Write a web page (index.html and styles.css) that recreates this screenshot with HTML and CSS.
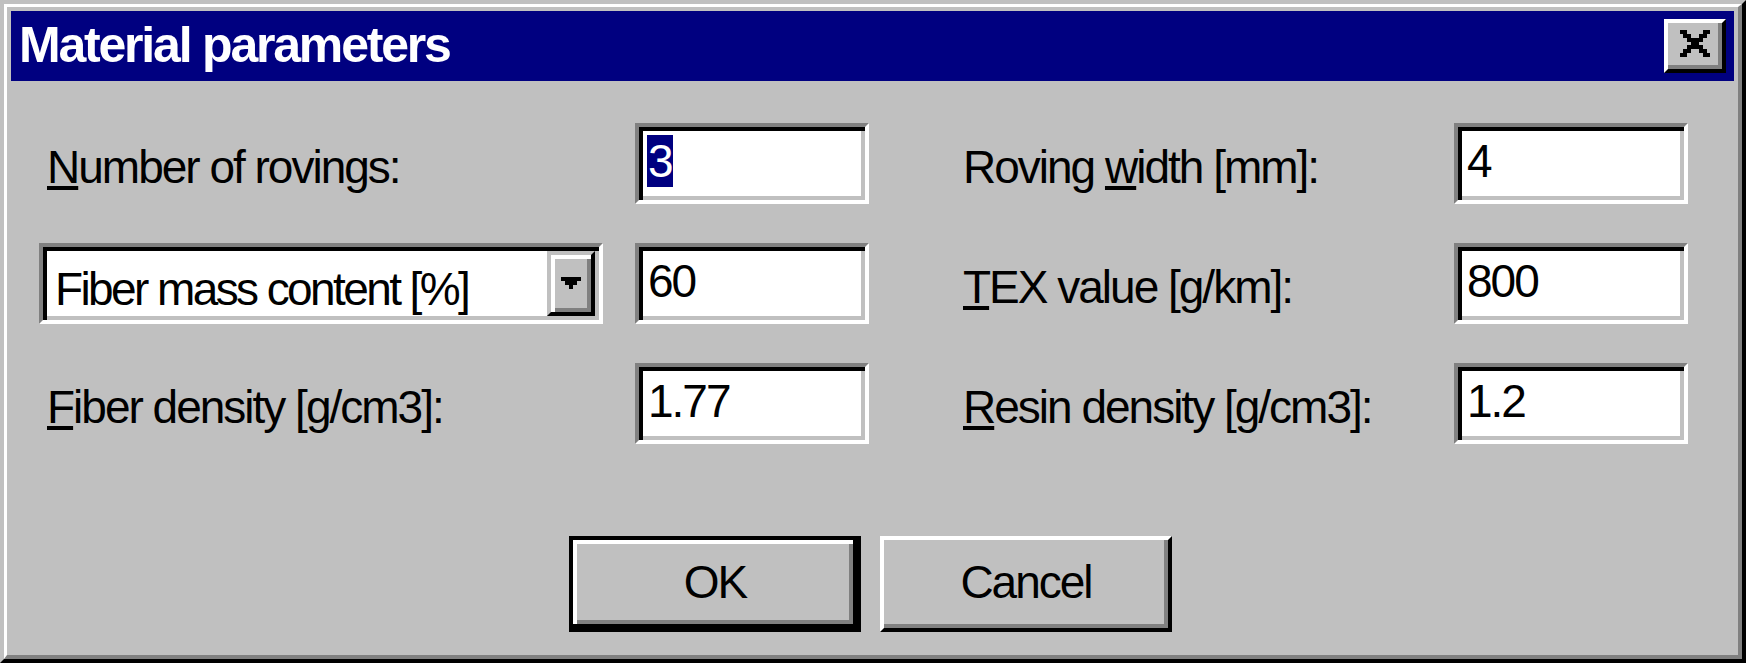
FILE: index.html
```html
<!DOCTYPE html>
<html>
<head>
<meta charset="utf-8">
<title>Material parameters</title>
<link rel="stylesheet" href="styles.css">
</head>
<body>
<div class="window">
  <div class="frame">
    <div class="titlebar">
      <span class="title">Material parameters</span>
      <div class="close" aria-label="Close">
        <svg class="close-glyph" viewBox="0 0 8 7" width="32" height="27" shape-rendering="crispEdges">
          <rect x="0" y="0" width="2" height="1"/><rect x="6" y="0" width="2" height="1"/>
          <rect x="1" y="1" width="2" height="1"/><rect x="5" y="1" width="2" height="1"/>
          <rect x="2" y="2" width="4" height="1"/>
          <rect x="3" y="3" width="2" height="1"/>
          <rect x="2" y="4" width="4" height="1"/>
          <rect x="1" y="5" width="2" height="1"/><rect x="5" y="5" width="2" height="1"/>
          <rect x="0" y="6" width="2" height="1"/><rect x="6" y="6" width="2" height="1"/>
        </svg>
      </div>
    </div>
    <div class="client">
      <div class="grid">
        <div class="label left"><u>N</u>umber of rovings:</div>
        <div class="edit"><span class="sel">3</span></div>
        <div class="label right">Roving <u>w</u>idth [mm]:</div>
        <div class="edit">4</div>

        <div class="combo">
          <span class="combo-text">Fiber mass content [%]</span>
          <span class="drop">
            <svg viewBox="0 0 5 3" width="20" height="12" shape-rendering="crispEdges">
              <rect x="0" y="0" width="5" height="1"/>
              <rect x="1" y="1" width="3" height="1"/>
              <rect x="2" y="2" width="1" height="1"/>
            </svg>
          </span>
        </div>
        <div class="edit">60</div>
        <div class="label right"><u>T</u>EX value [g/km]:</div>
        <div class="edit">800</div>

        <div class="label left"><u>F</u>iber density [g/cm3]:</div>
        <div class="edit">1.77</div>
        <div class="label right"><u>R</u>esin density [g/cm3]:</div>
        <div class="edit">1.2</div>
      </div>
      <div class="buttons">
        <div class="btn default">OK</div>
        <div class="btn">Cancel</div>
      </div>
    </div>
  </div>
</div>
</body>
</html>
```

FILE: styles.css
```css
html, body {
  margin: 0;
  padding: 0;
}

body {
  width: 1746px;
  height: 663px;
  overflow: hidden;
  background: #c0c0c0;
  font-family: "Liberation Sans", Arial, sans-serif;
  color: #000;
}

.window {
  box-sizing: border-box;
  width: 1746px;
  height: 663px;
  border: 4px solid;
  border-color: #c0c0c0 #000 #000 #c0c0c0;
}

.frame {
  box-sizing: border-box;
  height: 100%;
  border-style: solid;
  border-width: 3px 4px 4px 3px;
  border-color: #fff #808080 #808080 #fff;
  padding: 4px;
  display: flex;
  flex-direction: column;
}

.titlebar {
  height: 70px;
  flex: none;
  background: #000080;
  display: flex;
  justify-content: space-between;
  align-items: flex-start;
  padding-left: 8px;
}

.title {
  color: #fff;
  font-weight: bold;
  font-size: 50px;
  line-height: 68px;
  letter-spacing: -2.2px;
  white-space: nowrap;
}

.close {
  box-sizing: border-box;
  width: 62px;
  height: 54px;
  margin: 8px 8px 0 0;
  border: 4px solid;
  border-color: #fff #000 #000 #fff;
  box-shadow: inset -4px -4px 0 #808080;
  background: #c0c0c0;
  display: flex;
  justify-content: center;
  align-items: flex-start;
  padding-top: 7px;
}

.close-glyph {
  display: block;
  fill: #000;
}

.client {
  flex: 1;
  padding-top: 42px;
}

.grid {
  margin-left: 28px;
  display: grid;
  grid-template-columns: 596px 234px 585px 234px;
  grid-auto-rows: 80.5px;
  row-gap: 39.5px;
}

.label {
  font-size: 46px;
  line-height: 60px;
  letter-spacing: -2px;
  padding-top: 14px;
  white-space: nowrap;
}

.label.left {
  padding-left: 8px;
}

.label.right {
  padding-left: 94px;
}

.label u {
  text-decoration-thickness: 4px;
  text-underline-offset: 3px;
}

.edit {
  box-sizing: border-box;
  height: 100%;
  border: 4px solid;
  border-color: #808080 #fff #fff #808080;
  box-shadow: inset 4px 4px 0 #000, inset -4px -4px 0 #c0c0c0;
  background: #fff;
  font-size: 46px;
  line-height: 60px;
  letter-spacing: -2px;
  padding: 4px 0 0 9px;
  white-space: nowrap;
}

.sel {
  background: #000080;
  color: #fff;
  margin-left: -1px;
  padding-left: 1px;
  padding-right: 1px;
}

.combo {
  box-sizing: border-box;
  width: 564px;
  height: 100%;
  border: 4px solid;
  border-color: #808080 #fff #fff #808080;
  box-shadow: inset 4px 4px 0 #000, inset -4px -4px 0 #c0c0c0;
  background: #fff;
  padding: 4px 4px 4px 12px;
  display: flex;
}

.combo-text {
  flex: 1;
  font-size: 46px;
  line-height: 60px;
  letter-spacing: -2.6px;
  padding-top: 8px;
  white-space: nowrap;
}

.drop {
  box-sizing: border-box;
  width: 48px;
  height: 100%;
  border: 4px solid;
  border-color: #c0c0c0 #000 #000 #c0c0c0;
  box-shadow: inset 4px 4px 0 #fff, inset -4px -4px 0 #808080;
  background: #c0c0c0;
  display: flex;
  align-items: center;
  justify-content: center;
}

.drop svg {
  display: block;
  fill: #000;
}

.buttons {
  margin-top: 92.5px;
  padding-right: 4px;
  display: flex;
  justify-content: center;
  gap: 19px;
}

.btn {
  box-sizing: border-box;
  width: 292px;
  height: 96px;
  border: 4px solid;
  border-color: #fff #000 #000 #fff;
  box-shadow: inset -4px -4px 0 #808080;
  background: #c0c0c0;
  font-size: 46px;
  line-height: 84px;
  letter-spacing: -2px;
  text-align: center;
}

.btn.default {
  border-color: #000;
  box-shadow: inset -4px -4px 0 #000, inset 4px 4px 0 #fff, inset -8px -8px 0 #808080;
}
```
